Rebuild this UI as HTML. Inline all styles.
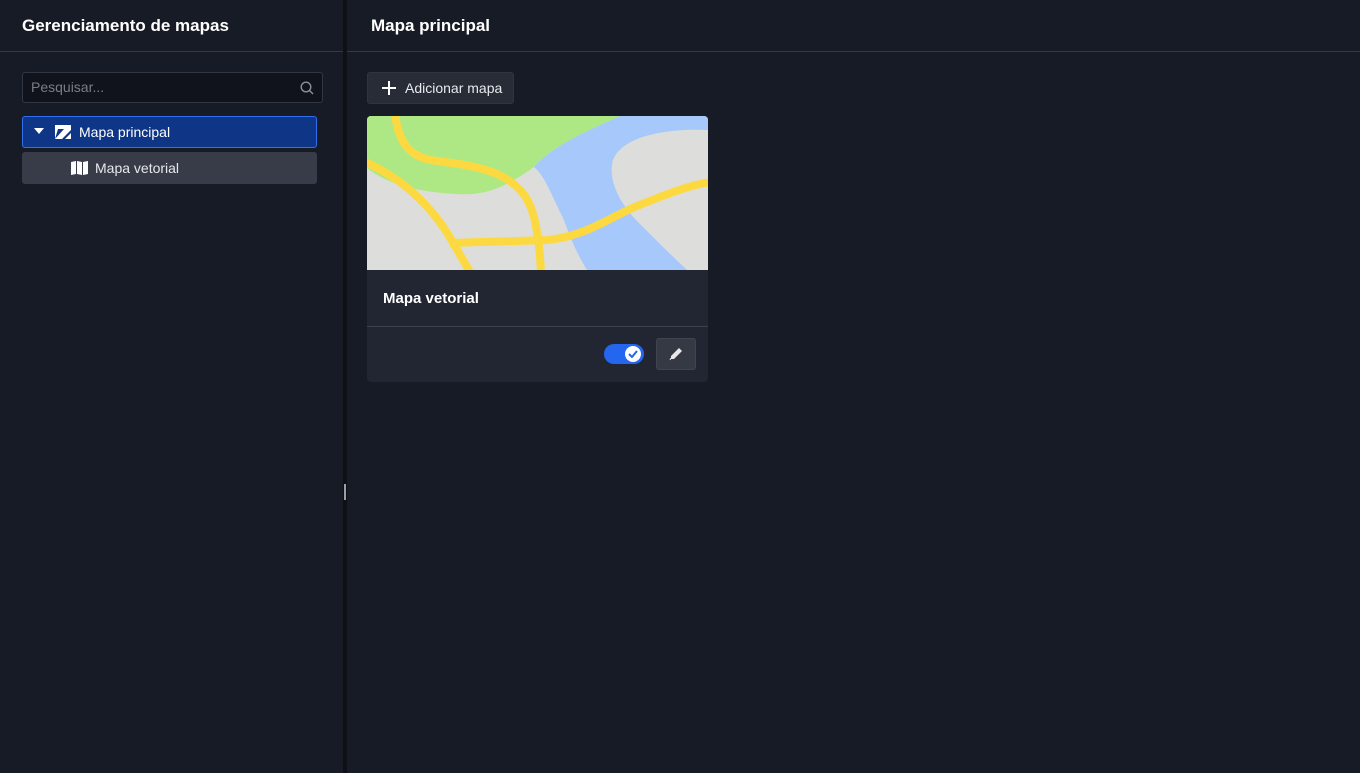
<!DOCTYPE html>
<html><head><meta charset="utf-8"><style>
*{box-sizing:border-box;margin:0;padding:0}
body{width:1360px;height:773px;background:#171b25;font-family:"Liberation Sans",sans-serif;color:#fff;position:relative;overflow:hidden}
.left{position:absolute;left:0;top:0;width:343px;height:773px;background:#171b25}
.div{position:absolute;left:343px;top:0;width:4px;height:773px;background:#0e1016}
.handle{position:absolute;left:344px;top:484px;width:2px;height:16px;background:#9aa0a8}
.hdr{position:absolute;top:0;height:52px;border-bottom:1px solid #343944;font-weight:bold;font-size:17px;line-height:52px}
.search{position:absolute;left:22px;top:72px;width:301px;height:31px;border:1px solid #323744;border-radius:3px;background:#10131b;color:#777d88;font-size:14px;line-height:29px;padding-left:8px}
.row{position:absolute;left:22px;width:295px;height:32px;border-radius:3px;font-size:14px;line-height:30px}
.btn{position:absolute;left:367px;top:72px;width:147px;height:32px;background:#272c37;border:1px solid #2f3440;border-radius:3px;font-size:14px;line-height:30px;padding-left:37px;color:#e8eaee}
.card{position:absolute;left:367px;top:116px;width:341px;height:266px;background:#222632;border-radius:4px;overflow:hidden}
</style></head><body>
<div class="left"></div>
<div class="hdr" style="left:0;width:343px;padding-left:22px">Gerenciamento de mapas</div>
<div class="hdr" style="left:347px;width:1013px;padding-left:24px">Mapa principal</div>
<div class="div"></div><div class="handle"></div>
<div class="search">Pesquisar...
<svg style="position:absolute;right:8px;top:8px" width="14" height="14" viewBox="0 0 14 14"><circle cx="6" cy="6" r="4.8" fill="none" stroke="#8a909a" stroke-width="1.4"/><path d="M9.5 9.5L13 13" stroke="#8a909a" stroke-width="1.4"/></svg></div>
<div class="row" style="top:116px;background:#0f3586;border:1px solid #2f6ff0">
<svg style="position:absolute;left:11px;top:11px" width="10" height="7"><path d="M0 0H10L5 6Z" fill="#fff"/></svg>
<svg style="position:absolute;left:32px;top:8px" width="16" height="14" viewBox="0 0 16 14"><rect width="16" height="14" fill="#fff"/><path d="M0 14L9 4H3Z" fill="#0f3586"/><path d="M7 14L16 5V8L10 14Z" fill="#0f3586"/></svg>
<span style="position:absolute;left:56px">Mapa principal</span></div>
<div class="row" style="top:152px;background:#383c48;color:#e6e8ec">
<svg style="position:absolute;left:49px;top:9px" width="17" height="14" viewBox="0 0 17 14"><path d="M0 1L5 0V13L0 14Z M6 0L11 1V14L6 13Z M12 1L17 0V13L12 14Z" fill="#fff"/></svg>
<span style="position:absolute;left:73px;top:1px">Mapa vetorial</span></div>
<div class="btn"><svg style="position:absolute;left:14px;top:8px" width="14" height="14"><path d="M7 0V14M0 7H14" stroke="#fff" stroke-width="2"/></svg>Adicionar mapa</div>
<div class="card">
<svg width="341" height="154" viewBox="0 0 341 154" style="display:block">
<rect width="341" height="154" fill="#dddedb"/>
<path d="M0 0H253C220 15 185 30 167 51C140 70 120 80 90 78C50 76 20 68 0 52Z" fill="#aee884"/>
<path d="M253 0H341V154H220C205 130 200 110 195 100C185 80 178 60 167 51C185 30 220 15 253 0Z" fill="#a6c8fb"/>
<path d="M341 14C300 12 255 20 246 44C240 65 255 90 270 105C290 125 305 140 320 154H341Z" fill="#dddedb"/>
<g fill="none" stroke="#fdd941" stroke-width="8">
<path d="M28 -2C32 30 45 42 70 45C110 50 140 55 158 80C168 95 172 120 174 156"/>
<path d="M-2 46C35 62 65 90 85 125L103 156"/>
<path d="M83 127L180 124C220 120 245 100 270 90C300 78 320 70 343 66"/>
</g></svg>
<div style="position:absolute;left:16px;top:174px;font-weight:bold;font-size:15px">Mapa vetorial</div>
<div style="position:absolute;left:0;top:210px;width:341px;height:1px;background:#3d414c"></div>
<div style="position:absolute;left:237px;top:228px;width:40px;height:20px;border-radius:10px;background:#2466f0"></div>
<div style="position:absolute;left:258px;top:230px;width:16px;height:16px;border-radius:8px;background:#fff"></div>
<svg style="position:absolute;left:261px;top:234px" width="10" height="8"><path d="M1 4L4 7L9 1" fill="none" stroke="#2466f0" stroke-width="2"/></svg>
<div style="position:absolute;left:289px;top:222px;width:40px;height:32px;border-radius:3px;background:#353944;border:1px solid #40444f"></div>
<svg style="position:absolute;left:302px;top:231px" width="14" height="14" viewBox="0 0 14 14"><path d="M10 1L13 4L5 12L2 12L2 9Z" fill="#e8e8e8"/><path d="M1 13L2 11" stroke="#e8e8e8"/></svg>
</div>
</body></html>
